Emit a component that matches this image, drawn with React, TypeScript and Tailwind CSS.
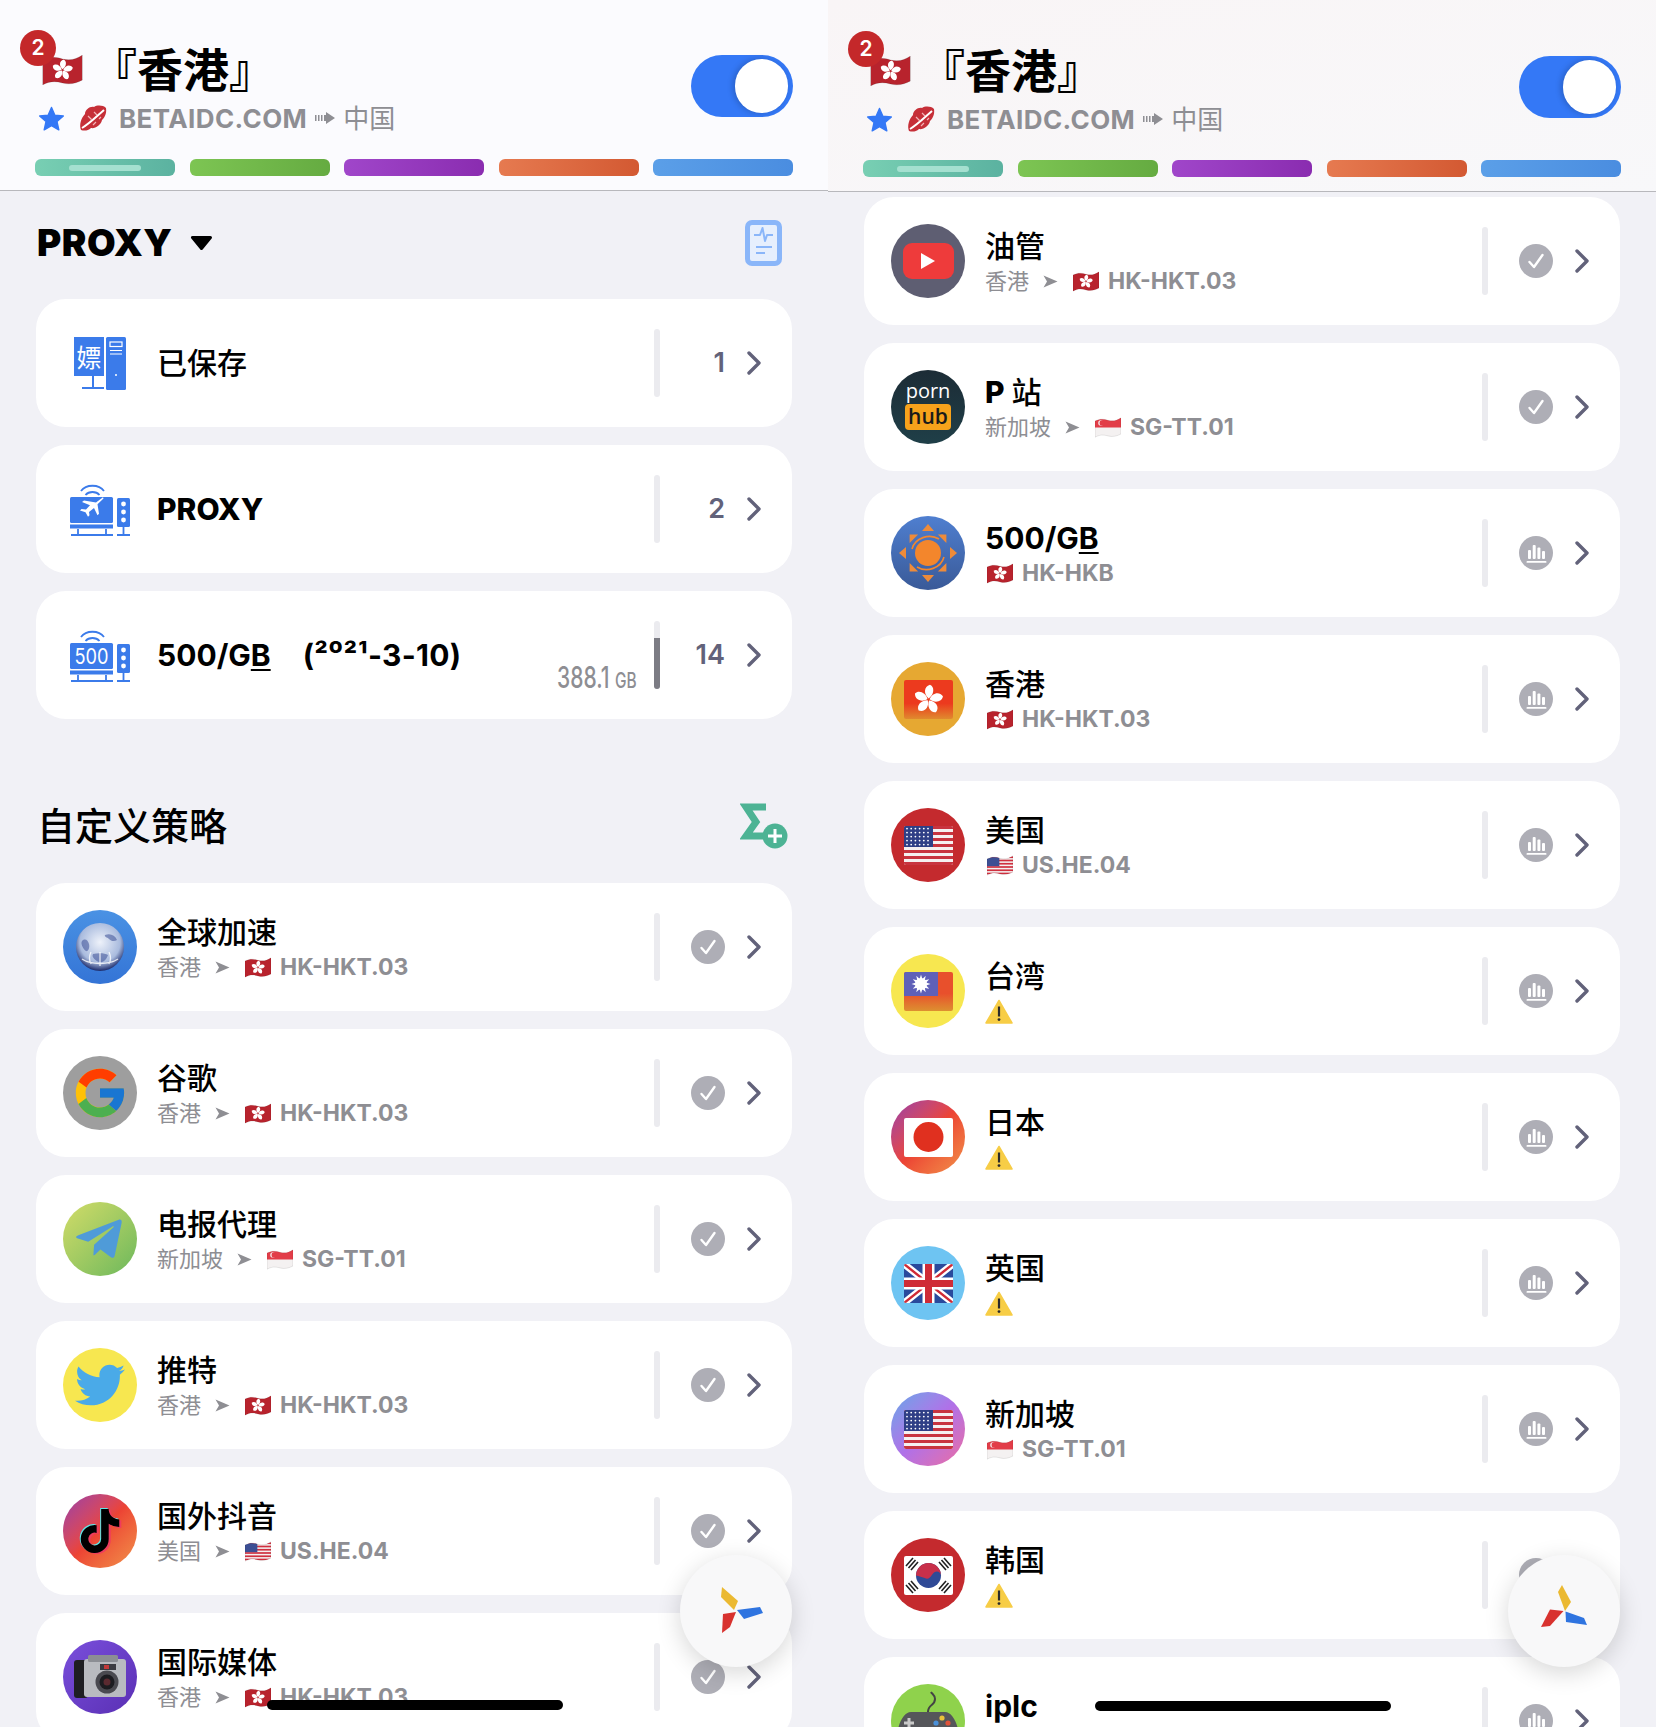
import React from "react";
import { FaTelegramPlane, FaTiktok, FaTwitter } from "react-icons/fa";
import { FcGoogle } from "react-icons/fc";

type FlagName = "hk" | "sg" | "us";

interface RowData {
  title: React.ReactNode;
  avatar: React.ReactNode;
  via?: string;
  flag?: FlagName;
  node?: string;
  status: "check" | "bars";
}

// 꽃잎 다섯개
function Petals({ cx, cy, size, fill = "#fff" }: { cx: number; cy: number; size: number; fill?: string }) {
  return (
    <g>
      {[0, 72, 144, 216, 288].map((deg) => (
        <path key={deg} d="M0 -0.08C-0.42 -0.3 -0.5 -0.85 -0.08 -1.05C0.3 -0.95 0.34 -0.4 0 -0.08Z" fill={fill} transform={`translate(${cx} ${cy}) rotate(${deg + 10}) scale(${size})`} />
      ))}
    </g>
  );
}

function WavyFlag({ name, className }: { name: FlagName; className: string }) {
  const shape = "M0 5C8 1 14 2 20 4C28 6 34 4 40 0V25C34 28 28 30 20 28C13 26 7 26 0 30Z";
  return (
    <svg viewBox="0 0 40 30" className={className}>
      <defs>
        <clipPath id={`wave-${name}`}>
          <path d={shape} />
        </clipPath>
      </defs>
      <g clipPath={`url(#wave-${name})`}>
        {name === "hk" && (
          <>
            <rect width="40" height="30" fill="#b8232d" />
            <Petals cx={20} cy={15} size={10} />
          </>
        )}
        {name === "sg" && (
          <>
            <rect width="40" height="30" fill="#f4f1f1" />
            <rect width="40" height="15" fill="#e23d48" />
            <circle cx="9" cy="8" r="4" fill="#f4f1f1" />
            <circle cx="11" cy="8" r="4" fill="#e23d48" />
          </>
        )}
        {name === "us" && (
          <>
            <rect width="40" height="30" fill="#f4f1f1" />
            {[0, 5, 10, 15, 20, 25].map((y) => (
              <rect key={y} y={y + 1} width="40" height="2.6" fill="#d0303f" />
            ))}
            <rect width="19" height="16" fill="#3c4f94" />
          </>
        )}
      </g>
      <path d={shape} fill="none" stroke="#00000022" strokeWidth="1" />
    </svg>
  );
}

function WarnIcon() {
  return (
    <svg viewBox="0 0 28 25" className="w-[28px] h-[25px] block">
      <path d="M14 1.5 27 24H1Z" fill="#f7cd46" stroke="#f7cd46" strokeWidth="1.5" strokeLinejoin="round" />
      <path d="M14 7.5v10" stroke="#2b2b2b" strokeWidth="2.2" />
      <circle cx="14" cy="20.6" r="1.4" fill="#2b2b2b" />
    </svg>
  );
}

function Chevron() {
  return (
    <svg viewBox="0 0 14 24" className="w-[14px] h-[24px] block shrink-0">
      <path d="M2 2 12 12 2 22" fill="none" stroke="#62627a" strokeWidth="3.4" strokeLinecap="round" strokeLinejoin="round" />
    </svg>
  );
}

function SmallArrow() {
  return (
    <svg viewBox="0 0 15 13" className="w-[15px] h-[13px] block shrink-0">
      <path d="M0.5 0.5 14.5 6.5 0.5 12.5 4 6.5Z" fill="#8e8e93" />
    </svg>
  );
}

function StatusIcon({ type }: { type: "check" | "bars" }) {
  return (
    <svg viewBox="0 0 34 34" className="w-[34px] h-[34px] block">
      <circle cx="17" cy="17" r="17" fill="#aeaeb6" />
      {type === "check" ? (
        <path d="M10.5 18 15 23 23.5 11" fill="none" stroke="#fff" strokeWidth="2.4" strokeLinecap="round" strokeLinejoin="round" />
      ) : (
        <g fill="#fff">
          <rect x="9" y="14" width="3" height="9" rx="1" />
          <rect x="13.7" y="9" width="3" height="14" rx="1" />
          <rect x="18.4" y="11.5" width="3" height="11.5" rx="1" />
          <rect x="23" y="15" width="3" height="8" rx="1" />
          <rect x="7.5" y="25" width="20" height="1.8" rx="0.9" />
        </g>
      )}
    </svg>
  );
}

function SquareFlag({ children }: { children: React.ReactNode }) {
  return (
    <svg viewBox="0 0 49 39" className="w-[49px] h-[39px] block rounded-[2px]">
      {children}
    </svg>
  );
}

function UsStripes() {
  const stars: React.ReactNode[] = [];
  for (let r = 0; r < 5; r++) {
    for (let c = 0; c < 6; c++) {
      stars.push(<circle key={`${r}-${c}`} cx={3 + c * 4.2} cy={2.6 + r * 4} r="0.9" fill="#fff" />);
    }
  }
  return (
    <>
      <rect width="49" height="39" fill="#f5f0f0" />
      {[0, 6, 12, 18, 24, 30, 36].map((y) => (
        <rect key={y} y={y} width="49" height="3" fill="#c8343f" />
      ))}
      <rect width="29" height="21" fill="#2f3f86" />
      {stars}
    </>
  );
}

function CircleAvatar({ className, children }: { className: string; children?: React.ReactNode }) {
  return <div className={`w-[74px] h-[74px] rounded-full shrink-0 overflow-hidden flex items-center justify-center relative ${className}`}>{children}</div>;
}

function GlobeAvatar() {
  return (
    <CircleAvatar className="bg-linear-to-b from-[#4a92e4] to-[#3474d6]">
      <svg viewBox="0 0 50 50" className="w-[50px] h-[50px]">
        <defs>
          <radialGradient id="globe" cx="50%" cy="40%" r="60%">
            <stop offset="0%" stopColor="#eef2fa" />
            <stop offset="70%" stopColor="#a9bbde" />
            <stop offset="100%" stopColor="#1b2a6b" />
          </radialGradient>
        </defs>
        <circle cx="25" cy="25" r="24" fill="url(#globe)" />
        <path d="M7 19c3-3 6-1 7 3s-1 8-3 7-6-7-4-10ZM30 13c5-2 10 0 12 5-3 2-6 1-8-1s-5-2-4-4ZM18 32c5-1 12-1 15 1-2 6-6 8-9 7s-8-5-6-8Z" fill="#3a4f96" opacity="0.55" />
        <path d="M7 37c9 6 27 6 36 0M16 42c-2-4-2-8 0-12M34 42c2-4 2-8 0-12M25 44V30" stroke="#fff" strokeWidth="1.3" fill="none" opacity="0.8" />
      </svg>
    </CircleAvatar>
  );
}

function CameraAvatar() {
  return (
    <CircleAvatar className="bg-linear-to-br from-[#7a4fdc] to-[#5a2fb4]">
      <svg viewBox="0 0 52 46" className="w-[52px] h-[46px]">
        <rect x="0" y="6" width="14" height="38" rx="3" fill="#1e1e22" />
        <rect x="10" y="5" width="42" height="38" rx="3" fill="#b9bbc0" />
        <rect x="14" y="1" width="30" height="7" rx="1.5" fill="#8c8e94" />
        <rect x="26" y="10" width="16" height="6" fill="#3c3c42" />
        <rect x="30" y="11" width="5" height="4" fill="#c43a3a" />
        <circle cx="33" cy="28" r="11.5" fill="#4a4a50" />
        <circle cx="33" cy="28" r="7.5" fill="#1c1c20" />
        <circle cx="33" cy="28" r="3.5" fill="#5a2a30" />
      </svg>
    </CircleAvatar>
  );
}

function SunAvatar() {
  return (
    <CircleAvatar className="bg-linear-to-b from-[#4f7fd0] to-[#3a5a98]">
      <svg viewBox="0 0 74 74" className="w-[74px] h-[74px]">
        {[0, 45, 90, 135, 180, 225, 270, 315].map((deg) => (
          <path key={deg} d={deg % 90 === 0 ? "M37 8 43 15H31Z" : "M37 11 43 17H31Z"} fill="#ee8b3a" transform={`rotate(${deg} 37 37)`} />
        ))}
        <circle cx="37" cy="37" r="13" fill="#f3862c" />
        <path d="M21 33C24 22 38 17 48 23M53 41C50 52 36 57 26 51" fill="none" stroke="#f3862c" strokeWidth="1.6" />
      </svg>
    </CircleAvatar>
  );
}

function HkSquare() {
  return (
    <SquareFlag>
      <defs>
        <linearGradient id="hkSq" x1="0" y1="0" x2="0" y2="1">
          <stop offset="0.6" stopColor="#ec3a1e" />
          <stop offset="1" stopColor="#e08a2e" />
        </linearGradient>
      </defs>
      <rect width="49" height="39" fill="url(#hkSq)" />
      <Petals cx={24.5} cy={19.5} size={14} />
    </SquareFlag>
  );
}

function TwSquare() {
  return (
    <SquareFlag>
      <defs>
        <linearGradient id="twSq" x1="0" y1="0" x2="0" y2="1">
          <stop offset="0.55" stopColor="#e8502c" />
          <stop offset="1" stopColor="#dd9030" />
        </linearGradient>
      </defs>
      <rect width="49" height="39" fill="url(#twSq)" />
      <rect width="34" height="24" fill="#5f60b8" />
      {[0, 30, 60, 90, 120, 150, 180, 210, 240, 270, 300, 330].map((deg) => (
        <path key={deg} d="M17 2.5 18.4 7H15.6Z" fill="#fff" transform={`rotate(${deg} 17 12)`} />
      ))}
      <circle cx="17" cy="12" r="6" fill="#fff" />
    </SquareFlag>
  );
}

function JpSquare() {
  return (
    <SquareFlag>
      <rect width="49" height="39" fill="#fff" />
      <circle cx="24.5" cy="19" r="15" fill="#e0301f" />
    </SquareFlag>
  );
}

function UkSquare() {
  return (
    <SquareFlag>
      <rect width="49" height="39" fill="#2a4a9c" />
      <path d="M0 0 49 39M49 0 0 39" stroke="#fff" strokeWidth="7" />
      <path d="M0 0 49 39M49 0 0 39" stroke="#cf2b36" strokeWidth="2.4" />
      <path d="M24.5 0V39M0 19.5H49" stroke="#fff" strokeWidth="12" />
      <path d="M24.5 0V39M0 19.5H49" stroke="#cf2b36" strokeWidth="7" />
    </SquareFlag>
  );
}

function KrSquare() {
  return (
    <SquareFlag>
      <rect width="49" height="39" fill="#fff" />
      <circle cx="24.5" cy="19.5" r="12.5" fill="#2f4a96" />
      <path d="M12 19.5A12.5 12.5 0 0 1 37 19.5C37 16 33 14 30 16.5S26 24 22 22.5 15 20 12 19.5Z" fill="#c8304a" />
      <g stroke="#222" strokeWidth="1.6">
        <path d="M2 10 9 2M4.5 12 11.5 4M7 14 14 6" />
        <path d="M35 6 42 14M37.5 4 44.5 12M40 2 47 10" />
        <path d="M2 29 9 37M4.5 27 11.5 35M7 25 14 33" />
        <path d="M35 33 42 25M37.5 35 44.5 27M40 37 47 29" />
      </g>
    </SquareFlag>
  );
}

function GamepadAvatar() {
  return (
    <CircleAvatar className="bg-[#8fd24c]">
      <svg viewBox="0 0 74 74" className="w-[74px] h-[74px]">
        <path d="M37 28C37 20 44 22 44 15 44 11 41 10 40 8" fill="none" stroke="#444" strokeWidth="2" />
        <path d="M20 28H54C62 28 68 42 68 54 68 62 60 64 55 58L50 52H24L19 58C14 64 6 62 6 54 6 42 12 28 20 28Z" fill="#55565a" />
        <path d="M18 34V44M13 39H23" stroke="#c9c9c9" strokeWidth="3" />
        <circle cx="51" cy="34" r="2.6" fill="#e8c23a" />
        <circle cx="57" cy="39" r="2.6" fill="#e0533a" />
        <circle cx="45" cy="39" r="2.6" fill="#4a90d9" />
      </svg>
    </CircleAvatar>
  );
}

const leftRows: RowData[] = [
  { title: "全球加速", via: "香港", flag: "hk", node: "HK-HKT.03", status: "check", avatar: <GlobeAvatar /> },
  {
    title: "谷歌",
    via: "香港",
    flag: "hk",
    node: "HK-HKT.03",
    status: "check",
    avatar: (
      <CircleAvatar className="bg-[#9e9e9e]">
        <FcGoogle className="w-[58px] h-[58px]" />
      </CircleAvatar>
    ),
  },
  {
    title: "电报代理",
    via: "新加坡",
    flag: "sg",
    node: "SG-TT.01",
    status: "check",
    avatar: (
      <CircleAvatar className="bg-linear-to-br from-[#d2dc68] to-[#6ab85c]">
        <FaTelegramPlane className="w-[52px] h-[52px] text-[#4f9bd8] -ml-[3px]" />
      </CircleAvatar>
    ),
  },
  {
    title: "推特",
    via: "香港",
    flag: "hk",
    node: "HK-HKT.03",
    status: "check",
    avatar: (
      <CircleAvatar className="bg-[#f7e750]">
        <FaTwitter className="w-[50px] h-[50px] text-[#4aaae8]" />
      </CircleAvatar>
    ),
  },
  {
    title: "国外抖音",
    via: "美国",
    flag: "us",
    node: "US.HE.04",
    status: "check",
    avatar: (
      <CircleAvatar className="bg-linear-to-br from-[#9a3aa6] via-[#ec4334] to-[#f0904a]">
        <FaTiktok className="absolute w-[44px] h-[44px] text-[#5fe6e6] -ml-[3px] -mt-[2px]" />
        <FaTiktok className="absolute w-[44px] h-[44px] text-[#ef3b5e] ml-[3px] mt-[2px]" />
        <FaTiktok className="relative w-[44px] h-[44px] text-black" />
      </CircleAvatar>
    ),
  },
  { title: "国际媒体", via: "香港", flag: "hk", node: "HK-HKT.03", status: "check", avatar: <CameraAvatar /> },
];

const rightRows: RowData[] = [
  {
    title: "油管",
    via: "香港",
    flag: "hk",
    node: "HK-HKT.03",
    status: "check",
    avatar: (
      <CircleAvatar className="bg-[#5e5e72]">
        <div className="w-[51px] h-[36px] rounded-[9px] bg-[#ee3b3b] flex items-center justify-center">
          <svg viewBox="0 0 14 16" className="w-[14px] h-[16px]">
            <path d="M0 0 14 8 0 16Z" fill="#fff" />
          </svg>
        </div>
      </CircleAvatar>
    ),
  },
  {
    title: (
      <>
        <span className="font-extrabold mr-[7px]">P</span>站
      </>
    ),
    via: "新加坡",
    flag: "sg",
    node: "SG-TT.01",
    status: "check",
    avatar: (
      <CircleAvatar className="bg-linear-to-b from-[#1c2c36] to-[#1f3f48] flex-col">
        <span className="text-white text-[20px] leading-[20px] -mt-[3px] font-normal [font-family:'Open_Sans',sans-serif]">porn</span>
        <span className="mt-[3px] w-[46px] h-[26px] rounded-[4px] bg-[#f7a21b] text-[#1a1a1a] text-[21px] leading-[24px] text-center font-semibold [font-family:'Open_Sans',sans-serif]">hub</span>
      </CircleAvatar>
    ),
  },
  {
    title: (
      <span className="font-bold">
        500/G<span className="underline decoration-2 underline-offset-[3px]">B</span>
      </span>
    ),
    flag: "hk",
    node: "HK-HKB",
    status: "bars",
    avatar: <SunAvatar />,
  },
  {
    title: "香港",
    flag: "hk",
    node: "HK-HKT.03",
    status: "bars",
    avatar: (
      <CircleAvatar className="bg-[#e6a832]">
        <HkSquare />
      </CircleAvatar>
    ),
  },
  {
    title: "美国",
    flag: "us",
    node: "US.HE.04",
    status: "bars",
    avatar: (
      <CircleAvatar className="bg-[#c42a2e]">
        <SquareFlag>
          <UsStripes />
        </SquareFlag>
      </CircleAvatar>
    ),
  },
  {
    title: "台湾",
    status: "bars",
    avatar: (
      <CircleAvatar className="bg-[#f7e750]">
        <TwSquare />
      </CircleAvatar>
    ),
  },
  {
    title: "日本",
    status: "bars",
    avatar: (
      <CircleAvatar className="bg-linear-to-br from-[#9a3aa6] via-[#ec4334] to-[#f0904a]">
        <JpSquare />
      </CircleAvatar>
    ),
  },
  {
    title: "英国",
    status: "bars",
    avatar: (
      <CircleAvatar className="bg-[#6ec4f2]">
        <UkSquare />
      </CircleAvatar>
    ),
  },
  {
    title: "新加坡",
    flag: "sg",
    node: "SG-TT.01",
    status: "bars",
    avatar: (
      <CircleAvatar className="bg-linear-to-br from-[#5aa6e8] via-[#b070e8] to-[#ec6aa0]">
        <SquareFlag>
          <UsStripes />
        </SquareFlag>
      </CircleAvatar>
    ),
  },
  {
    title: "韩国",
    status: "bars",
    avatar: (
      <CircleAvatar className="bg-[#c42a2e]">
        <KrSquare />
      </CircleAvatar>
    ),
  },
  { title: <span className="font-bold">iplc</span>, status: "bars", avatar: <GamepadAvatar /> },
];

function Card({ icon, children, tail, usage, status, count }: { icon: React.ReactNode; children: React.ReactNode; tail?: React.ReactNode; usage?: boolean; status?: "check" | "bars"; count?: string }) {
  return (
    <div className="h-[128px] rounded-[30px] bg-white flex items-center pl-[27px] shrink-0">
      <div className="w-[74px] h-[74px] shrink-0 flex items-center justify-center">{icon}</div>
      <div className="ml-[20px] flex-1 min-w-0">{children}</div>
      {tail}
      <div className="w-[6px] h-[68px] rounded-[3px] bg-[#ebebef] shrink-0 flex items-end">
        {usage && <div className="w-[6px] h-[51px] rounded-b-[3px] bg-[#7c7c84]" />}
      </div>
      <div className="w-[34px] ml-[31px] flex justify-end">
        {status ? <StatusIcon type={status} /> : <span className="text-[27px] leading-[34px] font-semibold text-[#62627a]">{count}</span>}
      </div>
      <div className="ml-[22px] mr-[31px]">
        <Chevron />
      </div>
    </div>
  );
}

function PolicyCard({ row }: { row: RowData }) {
  return (
    <Card icon={row.avatar} status={row.status}>
      <div className="mt-[2px] text-[30px] leading-[36px] font-medium text-black whitespace-nowrap">{row.title}</div>
      <div className="mt-[3px] h-[30px] flex items-center text-[#8e8e93]">
        {row.via && (
          <>
            <span className="text-[22px] whitespace-nowrap">{row.via}</span>
            <span className="ml-[14px] mr-[15px]">
              <SmallArrow />
            </span>
          </>
        )}
        {row.flag ? (
          <>
            <WavyFlag name={row.flag} className={`w-[26px] h-[21px] shrink-0 ${row.via ? "" : "ml-[2px]"}`} />
            <span className="ml-[9px] text-[23px] font-bold whitespace-nowrap">{row.node}</span>
          </>
        ) : (
          <WarnIcon />
        )}
      </div>
    </Card>
  );
}

function TopBar({ right }: { right?: boolean }) {
  return (
    <header className={`border-b border-[#b8b8bc] pl-[35px] pr-[35px] flex flex-col ${right ? "h-[192px] pt-[31px] bg-linear-to-br from-[#f9f5f6] to-[#f8f8fa]" : "h-[191px] pt-[30px] bg-[#fbfbfe]"}`}>
      <div className="flex justify-between items-start">
        <div>
          <div className="flex h-[66px] -ml-[15px]">
            <div className="relative w-[63px] h-[55px] shrink-0">
              <WavyFlag name="hk" className="absolute left-[22px] top-[25px] w-[41px] h-[30px]" />
              <div className="absolute left-0 top-0 w-[36px] h-[36px] rounded-full bg-[#c4282a] text-white text-[21px] leading-[36px] text-center font-semibold">2</div>
            </div>
            <h1 className="ml-[8px] mt-[15px] text-[46px] leading-[50px] font-semibold text-black whitespace-nowrap">『香港』</h1>
          </div>
          <div className="mt-[7px] ml-[3px] h-[30px] flex items-center text-[#8e8e93]">
            <svg viewBox="0 0 27 26" className="w-[27px] h-[25px] shrink-0">
              <path d="M13.5 1.5 17 9.6 25.8 10.4 19.2 16.2 21.1 24.8 13.5 20.3 5.9 24.8 7.8 16.2 1.2 10.4 10 9.6Z" fill="#3478f6" stroke="#3478f6" strokeWidth="1.5" strokeLinejoin="round" />
            </svg>
            <svg viewBox="0 0 28 26" className="w-[28px] h-[26px] ml-[14px] shrink-0">
              <path d="M2 25C0 20 2 13 6 9 6 5 11 1 15 2 18 0 24 0 27 3 28 9 25 13 23 15 22 20 16 24 12 23 9 26 5 26 2 25Z" fill="#c62f38" />
              <path d="M3 23C10 19 17 12 25 5" fill="none" stroke="#fff" strokeWidth="2" />
              <path d="M9 11 13 15M15 7 18 10M14 20 17 17M20 14 22 12" stroke="#f3b3b6" strokeWidth="1.2" />
            </svg>
            <span className="ml-[12px] text-[26px] font-bold tracking-[0.4px] whitespace-nowrap">BETAIDC.COM</span>
            <svg viewBox="0 0 20 12" className="w-[20px] h-[12px] ml-[8px] shrink-0">
              <path d="M0 3h1.5v6H0ZM3 3h1.5v6H3ZM6 3h1.5v6H6ZM9 3h2V0l9 6-9 6V9H9Z" fill="#8e8e93" />
            </svg>
            <span className="ml-[8px] text-[26px] whitespace-nowrap">中国</span>
          </div>
        </div>
        <div className="mt-[25px] w-[102px] h-[62px] rounded-full bg-[#3478f6] flex items-center justify-end pr-[5px]">
          <div className="w-[53px] h-[54px] rounded-full bg-white shadow-[-2px_0_6px_rgba(0,0,0,0.2)]" />
        </div>
      </div>
      <div className="mt-[26px] flex gap-[14.5px] w-[758px]">
        <div className="flex-1 h-[17px] rounded-[6px] bg-linear-to-r from-[#78cfb3] to-[#5bb2a0] flex items-center justify-center">
          <div className="w-[72px] h-[6px] rounded-[3px] bg-[#a5e0d0]" />
        </div>
        <div className="flex-1 h-[17px] rounded-[6px] bg-linear-to-r from-[#7dc553] to-[#65ab41]" />
        <div className="flex-1 h-[17px] rounded-[6px] bg-linear-to-r from-[#a046ca] to-[#8a2cb0]" />
        <div className="flex-1 h-[17px] rounded-[6px] bg-linear-to-r from-[#e67a50] to-[#d35932]" />
        <div className="flex-1 h-[17px] rounded-[6px] bg-linear-to-r from-[#5b9fe8] to-[#4a8de0]" />
      </div>
    </header>
  );
}

function ServerIcon({ screen }: { screen: "plane" | "500" }) {
  return (
    <svg viewBox="0 0 60 53" className="w-[60px] h-[53px] block">
      <g fill="none" stroke="#3b7bea" strokeWidth="1.8">
        <path d="M11 8C16 1 29 1 34 8" />
        <path d="M15.5 12C19 8 26 8 29.5 12" />
      </g>
      <rect x="0" y="14" width="43" height="26" rx="1.5" fill="#3b7bea" />
      <rect x="0" y="41.5" width="43" height="4" fill="#3b7bea" />
      <path d="M1 52H43M8 46V52M36 46V52" stroke="#3b7bea" strokeWidth="1.8" />
      <rect x="47" y="15" width="13" height="29" rx="1.5" fill="#3b7bea" />
      <circle cx="53.5" cy="21" r="2.4" fill="#fff" />
      <circle cx="53.5" cy="29" r="2.4" fill="#fff" />
      <circle cx="53.5" cy="37" r="2.4" fill="#fff" />
      <path d="M47 52H60M53.5 44V52" stroke="#3b7bea" strokeWidth="1.8" />
      {screen === "plane" ? (
        <path d="M33 17 26 22.5 14 20.5 12 22 20 25.5 16 30 11.5 29.5 10 31 15.5 33 18 37.5 19.5 36 19 32.5 24 28.5 27.5 36 29 34.5 27.5 24.5 33.5 18.5Z" fill="#fff" transform="translate(0 -2) scale(1 0.95)" />
      ) : (
        <text x="21.5" y="35" textAnchor="middle" fontSize="21" fill="#fff" textLength="34" lengthAdjust="spacingAndGlyphs">500</text>
      )}
    </svg>
  );
}

function DesktopIcon() {
  return (
    <svg viewBox="0 0 52 53" className="w-[52px] h-[53px] block">
      <rect x="0" y="0" width="30" height="39" fill="#3b7bea" />
      <text x="15" y="30" textAnchor="middle" fontSize="25" fill="#fff">嫖</text>
      <path d="M19 39V51M8 51H30" stroke="#3b7bea" strokeWidth="2" />
      <rect x="32" y="0" width="20" height="53" rx="1.5" fill="#3b7bea" />
      <rect x="36" y="5" width="12" height="4.5" fill="none" stroke="#fff" strokeWidth="1.2" />
      <path d="M36 13.5H48M36 17H48" stroke="#fff" strokeWidth="1.2" />
      <circle cx="42" cy="38" r="1" fill="#fff" />
    </svg>
  );
}

function Fab({ right }: { right?: boolean }) {
  return (
    <div className="absolute left-[680px] top-[1555px] w-[112px] h-[112px] rounded-full bg-[#f8f8f9] shadow-[0_6px_24px_rgba(0,0,0,0.16)]">
      <svg viewBox="0 0 112 112" className="w-[112px] h-[112px]">
        {right ? (
          <>
            <path d="M54 30 63 47 57 56 50 37Z" fill="#ebb931" />
            <path d="M57.5 56.5 76 63 79 70 58 67Z" fill="#2f74e0" />
            <path d="M42 54.5 55.5 56 42 71 33 72Z" fill="#d8322f" />
          </>
        ) : (
          <>
            <path d="M42 32 58 46 54 55 41 42Z" fill="#ebb931" />
            <path d="M57 55 80 52 83 58 64 64Z" fill="#2f74e0" />
            <path d="M43 59 56 57 50 72 42 78Z" fill="#d8322f" />
          </>
        )}
      </svg>
    </div>
  );
}

function HomeBar({ top }: { top: string }) {
  return <div className={`absolute left-[267px] w-[296px] h-[10px] rounded-full bg-black ${top}`} />;
}

export default function App() {
  return (
    <div className="w-[1656px] h-[1727px] flex overflow-hidden bg-[#f1f1f6] [font-family:Inter,'Noto_Sans_CJK_SC',sans-serif]">
      {/* 왼쪽 화면 */}
      <section className="w-[828px] h-[1727px] relative overflow-hidden">
        <TopBar />
        <main className="px-[36px]">
          <div className="mt-[29px] mb-[33px] h-[46px] flex items-center justify-between">
            <div className="flex items-center pl-[1px]">
              <span className="text-[37px] leading-[46px] font-black text-black tracking-[0.5px]">PROXY</span>
              <svg viewBox="0 0 23 14" className="w-[23px] h-[14px] ml-[18px]">
                <path d="M2.5 1.5H20.5L11.5 12.5Z" fill="#000" stroke="#000" strokeWidth="3" strokeLinejoin="round" />
              </svg>
            </div>
            <svg viewBox="0 0 37 46" className="w-[37px] h-[46px] mr-[10px]">
              <rect x="2.5" y="2.5" width="32" height="41" rx="4.5" fill="#e6effd" stroke="#8ab6f9" strokeWidth="5" />
              <path d="M9 15H15L17.5 8 20 21 22 15H28M11 27H27M11 33H20" fill="none" stroke="#8ab6f9" strokeWidth="2" strokeLinejoin="round" />
            </svg>
          </div>
          <div className="flex flex-col gap-[18px]">
            <Card icon={<DesktopIcon />} count="1">
              <div className="text-[30px] font-medium text-black">已保存</div>
            </Card>
            <Card icon={<ServerIcon screen="plane" />} count="2">
              <div className="text-[30px] font-extrabold text-black">PROXY</div>
            </Card>
            <Card
              icon={<ServerIcon screen="500" />}
              count="14"
              usage
              tail={
                <div className="self-end mb-[22px] mr-[17px] text-[#8e8e93] font-medium whitespace-nowrap origin-right scale-x-[0.7]">
                  <span className="text-[30px] leading-[34px]">388.1</span>
                  <span className="ml-[8px] text-[22px]">GB</span>
                </div>
              }
            >
              <div className="text-[30px] font-bold text-black whitespace-nowrap">
                500/G<span className="underline decoration-2 underline-offset-[3px]">B</span>
                <span className="ml-[32px] tracking-[0.3px]">(²⁰²¹-3-10)</span>
              </div>
            </Card>
          </div>
          <div className="mt-[84px] mb-[34px] h-[46px] flex items-center justify-between">
            <h2 className="pl-[1px] text-[38px] leading-[46px] font-medium text-black">自定义策略</h2>
            <svg viewBox="0 0 48 46" className="w-[48px] h-[46px] mr-[4px]">
              <path d="M26 4H6L16 19 6 33H27" fill="none" stroke="#4db394" strokeWidth="7" strokeLinejoin="miter" />
              <circle cx="35" cy="33" r="12.5" fill="#4db394" />
              <path d="M35 26V40M28 33H42" stroke="#fff" strokeWidth="3" />
            </svg>
          </div>
          <div className="flex flex-col gap-[18px]">
            {leftRows.map((row, index) => (
              <PolicyCard key={index} row={row} />
            ))}
          </div>
        </main>
        <Fab />
        <HomeBar top="top-[1700px]" />
      </section>

      {/* 오른쪽 화면 */}
      <section className="w-[828px] h-[1727px] relative overflow-hidden">
        <TopBar right />
        <main className="px-[36px] pt-[5px] flex flex-col gap-[18px]">
          {rightRows.map((row, index) => (
            <PolicyCard key={index} row={row} />
          ))}
        </main>
        <Fab right />
        <HomeBar top="top-[1701px]" />
      </section>
    </div>
  );
}
